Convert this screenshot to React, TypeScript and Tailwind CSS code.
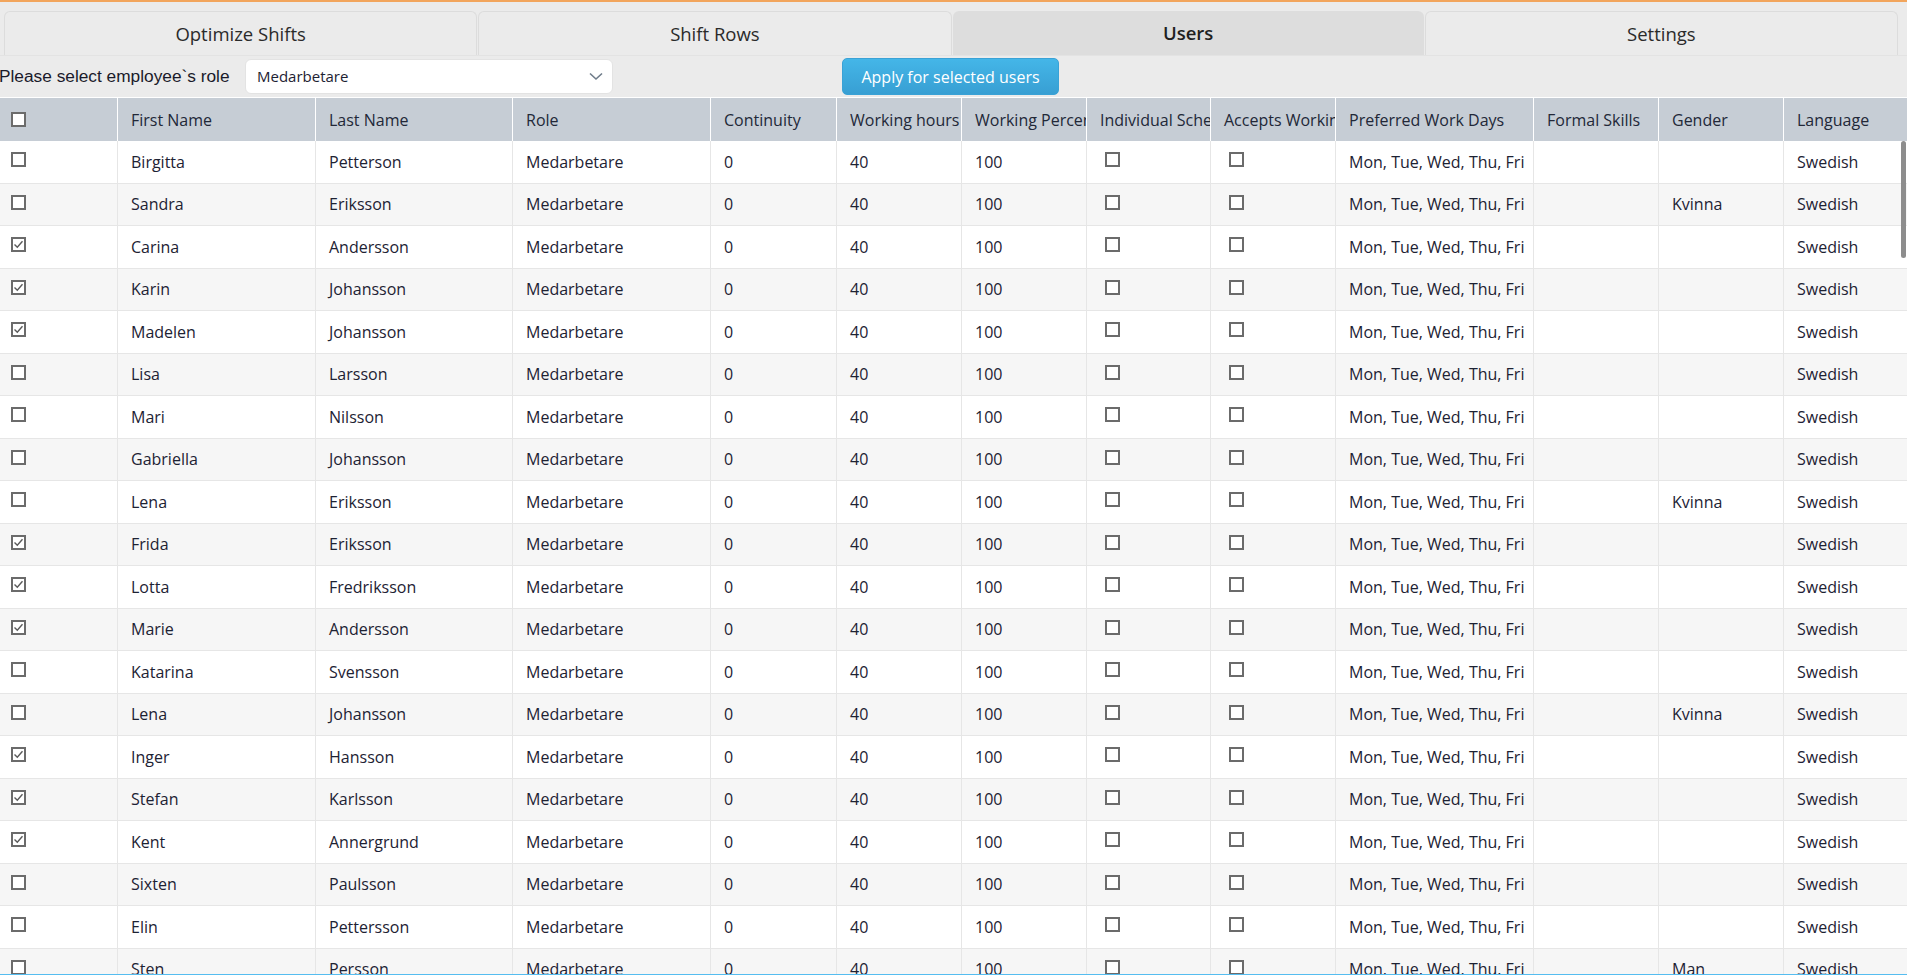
import React from 'react';

type User = {
  first: string;
  last: string;
  checked: boolean;
  gender?: string;
};

const users: User[] = [
  { first: 'Birgitta', last: 'Petterson', checked: false },
  { first: 'Sandra', last: 'Eriksson', checked: false, gender: 'Kvinna' },
  { first: 'Carina', last: 'Andersson', checked: true },
  { first: 'Karin', last: 'Johansson', checked: true },
  { first: 'Madelen', last: 'Johansson', checked: true },
  { first: 'Lisa', last: 'Larsson', checked: false },
  { first: 'Mari', last: 'Nilsson', checked: false },
  { first: 'Gabriella', last: 'Johansson', checked: false },
  { first: 'Lena', last: 'Eriksson', checked: false, gender: 'Kvinna' },
  { first: 'Frida', last: 'Eriksson', checked: true },
  { first: 'Lotta', last: 'Fredriksson', checked: true },
  { first: 'Marie', last: 'Andersson', checked: true },
  { first: 'Katarina', last: 'Svensson', checked: false },
  { first: 'Lena', last: 'Johansson', checked: false, gender: 'Kvinna' },
  { first: 'Inger', last: 'Hansson', checked: true },
  { first: 'Stefan', last: 'Karlsson', checked: true },
  { first: 'Kent', last: 'Annergrund', checked: true },
  { first: 'Sixten', last: 'Paulsson', checked: false },
  { first: 'Elin', last: 'Pettersson', checked: false },
  { first: 'Sten', last: 'Persson', checked: false, gender: 'Man' },
];

const tabs = ['Optimize Shifts', 'Shift Rows', 'Users', 'Settings'];

const headers = [
  'First Name',
  'Last Name',
  'Role',
  'Continuity',
  'Working hours',
  'Working Percentage',
  'Individual Schedule',
  'Accepts Working Weekends',
  'Preferred Work Days',
  'Formal Skills',
  'Gender',
  'Language',
];

const gridCols =
  'grid grid-cols-[118px_198px_197px_198px_126px_125px_125px_124px_125px_198px_125px_125px_1fr]';

function Checkbox({ checked }: { checked: boolean }) {
  return (
    <div className="w-[15px] h-[15px] border-2 border-[#6b6b6b] bg-white flex items-center justify-center">
      {checked && (
        <svg width="11" height="11" viewBox="0 0 11 11">
          <polyline points="1.5,5.5 4.3,8.3 9.5,2.2" fill="none" stroke="#5a5a5a" strokeWidth="1.4" />
        </svg>
      )}
    </div>
  );
}

export default function App() {
  return (
    <div
      className="h-[975px] w-full overflow-hidden flex flex-col bg-[#ebebeb] border-t-[2px] border-t-[#f2a55c] border-b border-b-[#55bdf0] text-[#1d2233]"
      style={{ fontFamily: '"Open Sans", "Noto Sans", sans-serif' }}
    >
      {/* tabs */}
      <div className="flex gap-[1px] pt-[9px] pl-[4px] pr-[9px]">
        {tabs.map((tab) => (
          <div
            key={tab}
            className={
              tab === 'Users'
                ? 'flex-1 h-[44px] rounded-t-[6px] bg-[#dddddd] flex items-center justify-center text-[18.5px] font-semibold text-[#1f1f1f]'
                : 'flex-1 h-[44px] rounded-t-[6px] bg-[#ebebeb] border border-b-0 border-[#dcdcdc] flex items-center justify-center text-[18.5px] text-[#2a2a2a]'
            }
          >
            {tab}
          </div>
        ))}
      </div>
      <div className="h-[1px] bg-[#e3e3e3]" />

      {/* toolbar */}
      <div className="h-[41px] flex items-center">
        <span
          className="w-[246px] -ml-[1px] text-[17.3px] text-[#1a1a2a] whitespace-nowrap"
          style={{ fontFamily: '"Liberation Sans", Arial, sans-serif' }}
        >
          Please select employee`s role
        </span>
        <div className="w-[368px] h-[35px] bg-white rounded-[6px] border border-[#e3e3e3] flex items-center justify-between pl-[11px] pr-[9px] text-[15px]">
          <span>Medarbetare</span>
          <svg width="14" height="9" viewBox="0 0 14 9">
            <polyline points="1,1.5 7,7 13,1.5" fill="none" stroke="#6f7c8a" strokeWidth="1.6" />
          </svg>
        </div>
        <button className="ml-[229px] w-[217px] h-[37px] rounded-[5px] bg-gradient-to-b from-[#44b6e8] to-[#389fd3] border border-[#3aa2d6] text-white text-[16px] flex items-center justify-center">
          Apply for selected users
        </button>
      </div>

      {/* table */}
      <div className="relative flex-1 overflow-hidden">
        <div className={`${gridCols} h-[44px] bg-[#c6cdd5] border-t border-white`}>
          <div className="flex items-center pl-[11px] border-r border-white">
            <Checkbox checked={false} />
          </div>
          {headers.map((h, i) => (
            <div
              key={h}
              className={`flex items-center pl-[13px] overflow-hidden whitespace-nowrap text-[16px] text-[#222838] ${
                i < headers.length - 1 ? 'border-r border-white' : ''
              }`}
            >
              {h}
            </div>
          ))}
        </div>

        {users.map((u, idx) => {
          const cells: React.ReactNode[] = [
            u.first,
            u.last,
            'Medarbetare',
            '0',
            '40',
            '100',
            <Checkbox key="a" checked={false} />,
            <Checkbox key="b" checked={false} />,
            'Mon, Tue, Wed, Thu, Fri',
            '',
            u.gender || '',
            'Swedish',
          ];
          return (
            <div
              key={idx}
              className={`${gridCols} h-[42.5px] border-b border-[#e6e6e6] ${
                idx % 2 === 1 ? 'bg-[#f6f6f6]' : 'bg-white'
              }`}
            >
              <div className="flex items-start pt-[11px] pl-[11px] border-r border-[#e6e6e6]">
                <Checkbox checked={u.checked} />
              </div>
              {cells.map((c, i) => (
                <div
                  key={i}
                  className={`overflow-hidden whitespace-nowrap text-[16px] ${
                    typeof c === 'string' ? 'flex items-center pl-[13px]' : 'flex items-start pt-[11px] pl-[18px]'
                  } ${i < cells.length - 1 ? 'border-r border-[#e6e6e6]' : ''}`}
                >
                  {c}
                </div>
              ))}
            </div>
          );
        })}

        {/* overlay scrollbar */}
        <div className="absolute right-[1px] top-[44px] w-[5px] h-[117px] rounded-full bg-[#8d8d8d]" />
      </div>
    </div>
  );
}
